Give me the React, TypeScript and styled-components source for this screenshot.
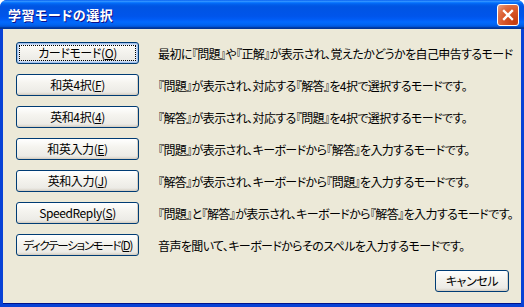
import React from "react";
import styled, { createGlobalStyle } from "styled-components";

const GlobalStyle = createGlobalStyle`
  html, body {
    margin: 0;
    padding: 0;
    background: #ffffff;
  }
  body {
    font-family: "Noto Sans CJK JP", "Liberation Sans", sans-serif;
  }
`;

const Window = styled.div`
  display: flex;
  flex-direction: column;
  width: 524px;
  height: 307px;
  box-sizing: border-box;
  background: #0842d6;
  border-radius: 7px 7px 0 0;
  overflow: hidden;
`;

const TitleBar = styled.div`
  display: flex;
  align-items: center;
  justify-content: space-between;
  height: 29px;
  flex-shrink: 0;
  padding: 0 5px 0 8px;
  box-sizing: border-box;
  background: linear-gradient(
    180deg,
    #0058ee 0%,
    #3593ff 4%,
    #288eff 6%,
    #127dff 8%,
    #036ffc 10%,
    #0262ee 14%,
    #0057e5 20%,
    #0054e3 24%,
    #0055eb 56%,
    #005bf5 66%,
    #026afe 76%,
    #0062ef 86%,
    #0052d6 92%,
    #0040ab 94%,
    #003092 100%
  );
`;

const Title = styled.span`
  color: #ffffff;
  font-size: 13px;
  font-weight: bold;
  letter-spacing: 0.5px;
  text-shadow: 1px 1px #0f1089;
  font-feature-settings: "palt";
`;

const CloseButton = styled.div`
  display: flex;
  align-items: center;
  justify-content: center;
  width: 22px;
  height: 22px;
  box-sizing: border-box;
  border: 1px solid #ffffff;
  border-radius: 3px;
  background: radial-gradient(circle at 85% 85%, #c43b0e 0%, #d9582a 50%, #e06f45 72%, #eba68a 100%);
`;

const Client = styled.div`
  display: flex;
  flex-direction: column;
  flex: 1;
  margin: 0 3px 3px 3px;
  padding: 13px 12px 0 13px;
  background: #ece9d8;
  border-bottom: 1px solid #00138c;
`;

const ModeList = styled.div`
  display: flex;
  flex-direction: column;
  gap: 10px;
`;

const Row = styled.div`
  display: flex;
  align-items: center;
  gap: 19px;
`;

const XpButton = styled.button<{ $width: number; $focused?: boolean; $squeeze?: boolean }>`
  position: relative;
  width: ${({ $width }) => $width}px;
  height: 22px;
  flex-shrink: 0;
  padding: 0;
  border: 1px solid #003c74;
  border-radius: 3px;
  background: linear-gradient(180deg, #ffffff 0%, #f5f4ef 40%, #ecebe6 85%, #d6d0c5 100%);
  color: #000000;
  font-family: "Noto Sans CJK JP", "Liberation Sans", sans-serif;
  font-size: ${({ $squeeze }) => ($squeeze ? "11.5px" : "12px")};
  line-height: 20px;
  white-space: nowrap;
  letter-spacing: ${({ $squeeze }) => ($squeeze ? "-1.3px" : "-0.4px")};
  font-feature-settings: "palt";
  box-shadow: ${({ $focused }) =>
    $focused
      ? "inset 0 0 0 1px #a2c0ec, inset 0 0 0 2px #cddff8"
      : "inset -1px -1px 0 #d6d0c5"};

  &::after {
    content: "";
    display: ${({ $focused }) => ($focused ? "block" : "none")};
    position: absolute;
    inset: 2px;
    border: 1px dotted #000000;
  }

  u {
    text-underline-offset: 1px;
  }
`;

const Description = styled.span`
  font-size: 12px;
  color: #000000;
  white-space: nowrap;
  letter-spacing: -0.6px;
  font-feature-settings: "palt";
`;

const Footer = styled.div`
  display: flex;
  justify-content: flex-end;
  margin-top: 14px;
`;

const CloseIcon = () => (
  <svg width="12" height="12" viewBox="0 0 12 12">
    <path d="M2 2 L10 10 M10 2 L2 10" stroke="#ffffff" strokeWidth="2.3" strokeLinecap="square" />
  </svg>
);

interface IMode {
  label: string;
  key: string;
  description: string;
  long?: boolean;
}

const modes: IMode[] = [
  { label: "カードモード", key: "O", description: "最初に『問題』や『正解』が表示され、覚えたかどうかを自己申告するモード" },
  { label: "和英4択", key: "F", description: "『問題』が表示され、対応する『解答』を4択で選択するモードです。" },
  { label: "英和4択", key: "4", description: "『解答』が表示され、対応する『問題』を4択で選択するモードです。" },
  { label: "和英入力", key: "E", description: "『問題』が表示され、キーボードから『解答』を入力するモードです。" },
  { label: "英和入力", key: "J", description: "『解答』が表示され、キーボードから『問題』を入力するモードです。" },
  { label: "SpeedReply", key: "S", description: "『問題』と『解答』が表示され、キーボードから『解答』を入力するモードです。" },
  { label: "ディクテーションモード", key: "D", description: "音声を聞いて、キーボードからそのスペルを入力するモードです。", long: true },
];

const App: React.FC = () => (
  <>
    <GlobalStyle />
    <Window>
      <TitleBar>
        <Title>学習モードの選択</Title>
        <CloseButton>
          <CloseIcon />
        </CloseButton>
      </TitleBar>
      <Client>
        <ModeList>
          {modes.map((mode, i) => (
            <Row key={mode.key}>
              <XpButton $width={123} $focused={i === 0} $squeeze={mode.long}>
                {mode.label}(<u>{mode.key}</u>)
              </XpButton>
              <Description>{mode.description}</Description>
            </Row>
          ))}
        </ModeList>
        <Footer>
          <XpButton $width={74}>キャンセル</XpButton>
        </Footer>
      </Client>
    </Window>
  </>
);

export default App;
